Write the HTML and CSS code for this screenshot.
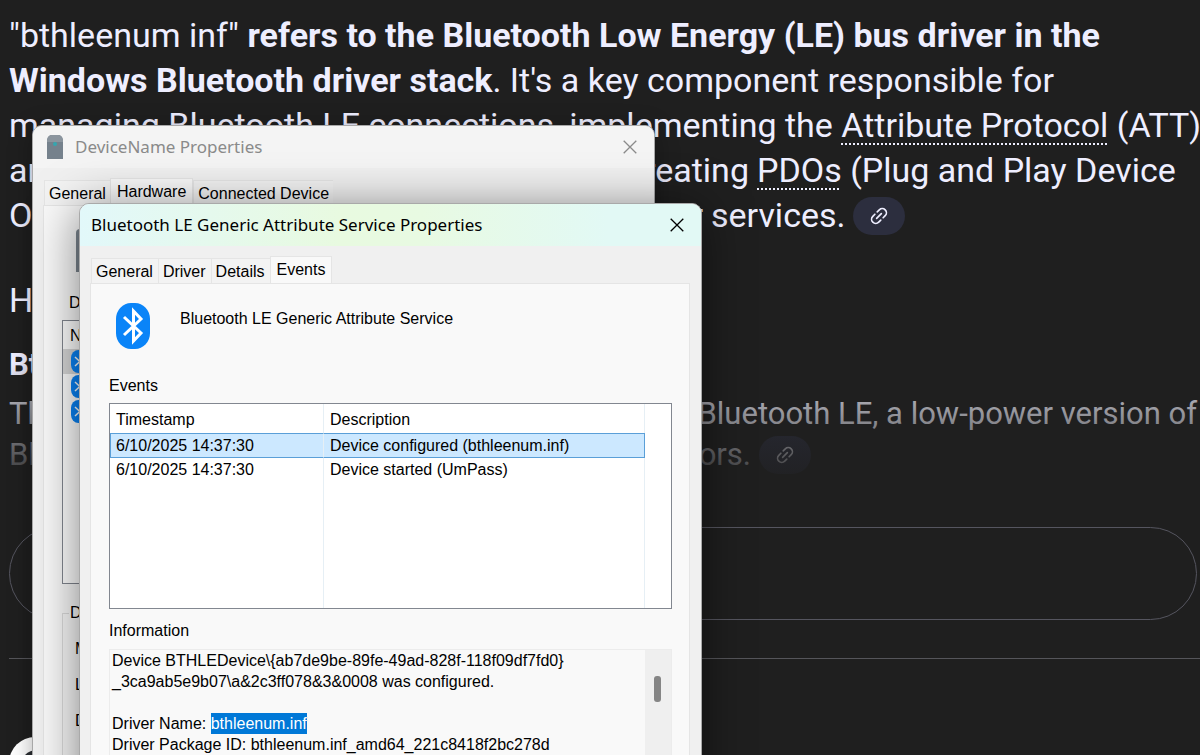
FILE: index.html
```
<!DOCTYPE html>
<html lang="en">
<head>
    <meta charset="UTF-8">
    <meta name="viewport" content="width=device-width, initial-scale=1.0">
    <title>bthleenum inf</title>
    <link rel="stylesheet" href="styles.css">
</head>
<body>
    <svg class="symbols" width="0" height="0">
        <symbol id="bluetooth" viewBox="0 0 34 46">
            <rect width="34" height="46" rx="15" ry="16" fill="#0a84f8"/>
            <path d="M8 14 L25 30 L17.5 38 V8 L25 16 L8 32" fill="none" stroke="#fff" stroke-width="3"/>
        </symbol>
        <symbol id="link" viewBox="0 0 24 24">
            <g transform="rotate(-45 12 12)" fill="none" stroke="currentColor" stroke-width="2" stroke-linecap="round">
                <path d="M10 7 H6.5 a5 5 0 0 0 0 10 H10"/>
                <path d="M14 7 H17.5 a5 5 0 0 1 0 10 H14"/>
                <path d="M8 12 H16"/>
            </g>
        </symbol>
        <symbol id="close" viewBox="0 0 14 14">
            <path d="M.7 .7 L13.3 13.3 M13.3 .7 L.7 13.3" fill="none" stroke="currentColor" stroke-width="1.3"/>
        </symbol>
    </svg>

    <main class="page">
        <article class="answer">
            <p class="intro">
                <span class="line">"bthleenum inf" <b>refers to the Bluetooth Low Energy (LE) bus driver in the</b></span>
                <span class="line"><b>Windows Bluetooth driver stack</b>. It's a key component responsible for</span>
                <span class="line">managing Bluetooth LE connections, implementing the <a class="term" href="#">Attribute Protocol</a> (ATT)</span>
                <span class="line split"><span class="lead">and <span>creating</span></span><span><a class="term" href="#">PDOs</a> (Plug and Play Device</span></span>
                <span class="line split"><span class="lead short">Objects) <span>or</span></span><span>services.</span><button class="chip" aria-label="Sources"><svg><use href="#link"/></svg></button></span>
            </p>
            <p class="intro">Here's a more detailed breakdown:</p>
            <h3>Bthleenum.inf:</h3>
            <p class="detail">
                <span class="line split"><span class="lead detail-lead">This <span>for</span></span><span>Bluetooth LE, a low-power version of</span></span>
                <span class="line split"><span class="lead last-lead">Bluetooth <span>sensors.</span></span><button class="chip" aria-label="Sources"><svg><use href="#link"/></svg></button></span>
            </p>
        </article>
        <button class="more">Show more</button>
        <hr>
        <div class="result">
            <svg class="avatar" viewBox="0 0 52 52"><circle cx="26" cy="26" r="26" fill="#fff"/><circle cx="28" cy="30" r="17" fill="#2c2f33"/></svg>
        </div>
    </main>

    <section class="window back">
        <header class="titlebar">
            <svg class="device" viewBox="0 0 16 24"><path d="M0 5 Q1 0 5 0 H11 Q15 0 16 5 V24 H0 Z" fill="#75818c"/><path d="M0 5 Q1 0 5 0 H11 Q15 0 16 5 V7 H0 Z" fill="#8b959e"/><circle cx="8" cy="9" r="2" fill="#35a6b0"/></svg>
            <h2>DeviceName Properties</h2>
            <button class="close" aria-label="Close"><svg><use href="#close"/></svg></button>
        </header>
        <nav class="tabs">
            <button>General</button>
            <button class="active">Hardware</button>
            <button>Connected Device</button>
        </nav>
        <div class="panel">
            <div class="device-large"></div>
            <p class="label">Device Functions:</p>
            <div class="functions">
                <p>Name</p>
                <div class="selected"><svg><use href="#bluetooth"/></svg></div>
                <div><svg><use href="#bluetooth"/></svg></div>
                <div><svg><use href="#bluetooth"/></svg></div>
            </div>
            <fieldset>
                <legend>Device Function Summary</legend>
                <p>Manufacturer:</p>
                <p>Location:</p>
                <p>Device status:</p>
            </fieldset>
        </div>
    </section>

    <section class="window front">
        <header class="titlebar">
            <h2>Bluetooth LE Generic Attribute Service Properties</h2>
            <button class="close" aria-label="Close"><svg><use href="#close"/></svg></button>
        </header>
        <nav class="tabs">
            <button>General</button>
            <button>Driver</button>
            <button>Details</button>
            <button class="active">Events</button>
        </nav>
        <div class="panel">
            <div class="service">
                <svg><use href="#bluetooth"/></svg>
                <p>Bluetooth LE Generic Attribute Service</p>
            </div>
            <h4>Events</h4>
            <div class="list">
                <table>
                    <thead>
                    <tr>
                    <th>Timestamp</th>
                    <th>Description</th>
                    </tr>
                    </thead>
                    <tbody>
                    <tr class="selected">
                    <td>6/10/2025 14:37:30</td>
                    <td>Device configured (bthleenum.inf)</td>
                    </tr>
                    <tr>
                    <td>6/10/2025 14:37:30</td>
                    <td>Device started (UmPass)</td>
                    </tr>
                    <tr class="rest"><td></td><td></td></tr>
                    </tbody>
                </table>
            </div>
            <label for="info">Information</label>
            <div class="info-box">
                <textarea id="info" readonly>Device BTHLEDevice\{ab7de9be-89fe-49ad-828f-118f09df7fd0}
_3ca9ab5e9b07\a&amp;2c3ff078&amp;3&amp;0008 was configured.

Driver Name: bthleenum.inf
Driver Package ID: bthleenum.inf_amd64_221c8418f2bc278d</textarea>
                <div class="scrollbar"><div class="thumb"></div></div>
            </div>
        </div>
    </section>
<script src="script.js"></script>
</body>
</html>
```
FILE: styles.css
```
*{
    box-sizing: border-box;
    margin: 0;
    padding: 0;
}
html,
body
{
    height: 100%;
    overflow: hidden;
}
body
{
    position: relative;
    background-color: #1f1f1f;
    color: #eeeeff;
    font-family: Roboto, sans-serif;
}
button
{
    border: 0;
    background: none;
    font: inherit;
    color: inherit;
}
.symbols
{
    display: none;
}

/* answer page */
.page
{
    padding: 13px 3px 0 9px;
}
.answer
{
    position: relative;
    height: 514px;
    font-size: 34px;
    line-height: 45px;
    white-space: nowrap;
}
.answer::after
{
    content: "";
    position: absolute;
    inset: 350px 0 0;
    background: linear-gradient(transparent, #1f1f1f 82%);
    pointer-events: none;
}
.line
{
    display: block;
}
.split
{
    display: flex;
    align-items: center;
}
.lead
{
    display: flex;
    justify-content: space-between;
    width: 748px;
    padding-right: 8px;
}
.short
{
    width: 702px;
}
.detail-lead
{
    width: 692px;
}
.last-lead
{
    width: 750px;
}
.term
{
    color: inherit;
    text-decoration: underline dotted 2px;
    text-decoration-skip-ink: none;
    text-underline-offset: 6px;
}
.intro
{
    margin-bottom: 40px;
}
.intro + .intro
{
    margin-bottom: 21px;
}
.answer h3
{
    margin-bottom: 8px;
    font-size: 31px;
    line-height: 41px;
}
.detail
{
    font-size: 31px;
    line-height: 41px;
    color: #dcdce6;
}
.chip
{
    display: flex;
    align-items: center;
    justify-content: center;
    width: 52px;
    height: 38px;
    margin-left: 8px;
    border-radius: 19px;
    background-color: #2c2e3e;
}
.detail .chip
{
    margin-left: 0;
}
.chip svg
{
    width: 20px;
    height: 20px;
}
.more
{
    display: block;
    width: 100%;
    height: 93px;
    border: 1px solid #55555f;
    border-radius: 47px;
    font-size: 28px;
}
.page hr
{
    margin: 38px -3px 0 0;
    border: 0;
    border-top: 1px solid #55555a;
}
.result
{
    padding-top: 78px;
}
.avatar
{
    width: 52px;
    height: 52px;
}

/* dialogs */
.window
{
    position: absolute;
    bottom: -60px;
    display: flex;
    flex-direction: column;
    width: 623px;
    overflow: hidden;
    border: 1px solid #a9a9a9;
    border-radius: 10px;
    background-color: #f0f0f0;
    color: #000;
    font-family: "Liberation Sans", Arial, sans-serif;
    font-size: 16px;
    line-height: 20px;
}
.back
{
    top: 125px;
    left: 32px;
    box-shadow: 0 4px 24px rgba(0, 0, 0, 0.3);
}
.front
{
    top: 203px;
    left: 79px;
    box-shadow: 0 6px 48px rgba(0, 0, 0, 0.5);
}
.titlebar
{
    display: flex;
    align-items: center;
    height: 42px;
    padding: 0 17px 0 14px;
    font-family: "Noto Sans", sans-serif;
}
.titlebar h2
{
    flex: 1;
    font-size: 17px;
    font-weight: normal;
}
.back .titlebar
{
    background-color: #f4f4f4;
    color: #8a8a8a;
}
.front .titlebar
{
    padding-left: 11px;
    background: linear-gradient(90deg, #e2f8fa, #e8fae0 42%, #e8fae2 55%, #e2f9f5 85%);
}
.device
{
    width: 16px;
    height: 24px;
    margin-right: 12px;
}
.close svg
{
    display: block;
    width: 14px;
    height: 14px;
}
.tabs
{
    display: flex;
    align-items: flex-end;
    height: 37px;
    padding-left: 11px;
}
.tabs button
{
    height: 25px;
    padding: 1px 4px 0;
    border: 1px solid #e5e5e5;
    border-bottom: 0;
    border-right: 0;
    background-color: #f3f3f3;
}
.tabs .active
{
    height: 27px;
    padding: 0 6px 1px;
    border-right: 1px solid #e5e5e5;
    background-color: #f9f9f9;
}
.front .tabs button:not(.active)
{
    padding-right: 5px;
}
.panel
{
    flex: 1;
    margin: 0 11px 0 10px;
    border: 1px solid #e5e5e5;
    background-color: #f9f9f9;
}

/* device dialog */
.back .panel
{
    padding: 23px 18px;
}
.device-large
{
    width: 30px;
    height: 43px;
    margin-left: 14px;
    border-radius: 4px 4px 0 0;
    background-color: #7d8790;
}
.back .label
{
    margin: 21px 0 7px 7px;
}
.functions
{
    height: 264px;
    border: 1px solid #828790;
    background-color: #fff;
}
.functions p
{
    height: 28px;
    padding: 5px 7px;
}
.functions div
{
    height: 25px;
    padding: 1px 0 0 8px;
}
.functions .selected
{
    background-color: #d9d9d9;
}
.functions svg
{
    width: 17px;
    height: 23px;
}
.back fieldset
{
    margin-top: 19px;
    padding: 16px 12px;
    border: 1px solid #dcdcdc;
}
.back legend
{
    margin-left: -6px;
    padding: 0 1px;
}
.back fieldset p
{
    height: 36px;
}

/* service dialog */
.front .panel
{
    padding: 19px 17px 0 18px;
}
.service
{
    display: flex;
    gap: 30px;
    padding-left: 7px;
}
.service svg
{
    width: 34px;
    height: 46px;
}
.service p
{
    padding-top: 6px;
}
.front h4
{
    margin: 27px 0 7px;
    font-weight: normal;
}
.list
{
    height: 206px;
    border: 1px solid #828790;
    background-color: #fff;
}
.list table
{
    width: 535px;
    height: 204px;
    table-layout: fixed;
    border-collapse: separate;
    border-spacing: 0;
}
.list th,
.list td
{
    height: 24px;
    padding: 0 6px;
    border-right: 1px solid #e6eff5;
    text-align: left;
    font-weight: normal;
}
.list th
{
    width: 214px;
    height: 29px;
    padding-top: 2px;
}
.list th:last-child
{
    width: auto;
}
.list .selected td
{
    height: 25px;
    border-top: 1px solid #5a9fd8;
    border-bottom: 1px solid #5a9fd8;
    background-color: #cce8ff;
}
.list .selected td:first-child
{
    border-left: 1px solid #5a9fd8;
    padding-left: 5px;
}
.list .selected td:last-child
{
    border-right-color: #5a9fd8;
}
.list .rest td
{
    height: auto;
}
.front label
{
    display: block;
    margin: 12px 0 8px;
}
.info-box
{
    display: flex;
    height: 150px;
    border: 1px solid #ececec;
}
.info-box textarea
{
    flex: 1;
    height: 100%;
    padding: 0 2px;
    overflow: hidden;
    border: 0;
    outline: 0;
    resize: none;
    background: none;
    color: #000;
    font-family: inherit;
    font-size: 16px;
    line-height: 21px;
}
.info-box textarea::selection
{
    background-color: #0078d7;
    color: #fff;
}
.scrollbar
{
    width: 26px;
    padding: 26px 9px;
    background-color: #efefef;
}
.thumb
{
    width: 7px;
    height: 26px;
    border-radius: 3px;
    background-color: #858585;
}
```
FILE: script.js
```
const info = document.getElementById("info");
const driver = "bthleenum.inf";
const start = info.value.indexOf(driver);
info.focus({ preventScroll: true });
info.setSelectionRange(start, start + driver.length);
```
